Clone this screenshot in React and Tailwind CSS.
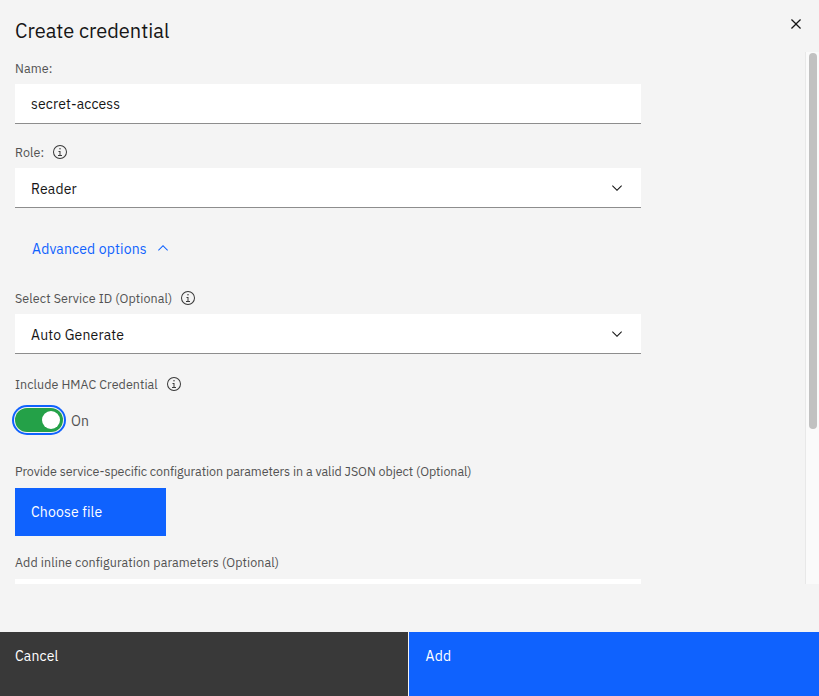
function InfoIcon() {
  return (
    <svg width="16" height="16" viewBox="0 0 32 32" fill="#393939" className="shrink-0">
      <path d="M17 22L17 14 13 14 13 16 15 16 15 22 12 22 12 24 20 24 20 22 17 22z" />
      <path d="M16 8a1.5 1.5 0 1 0 1.5 1.5A1.5 1.5 0 0 0 16 8Z" />
      <path d="M16 30A14 14 0 1 1 30 16 14 14 0 0 1 16 30ZM16 4A12 12 0 1 0 28 16 12 12 0 0 0 16 4Z" />
    </svg>
  );
}

function ChevronDown() {
  return (
    <svg width="16" height="16" viewBox="0 0 16 16" fill="#161616" className="shrink-0">
      <path d="M8 11L3 6 3.7 5.3 8 9.6 12.3 5.3 13 6z" />
    </svg>
  );
}

function Label({ children, className = "tracking-[0.1px]", info }) {
  return (
    <div className="flex h-4 shrink-0 items-center gap-2 text-[12.5px] leading-4 text-[#525252]">
      <span className={`whitespace-nowrap pb-px ${className}`}>{children}</span>
      {info && <InfoIcon />}
    </div>
  );
}

function Select({ value }) {
  return (
    <button className="mt-2 flex h-10 w-[626px] items-center justify-between border-b border-[#8d8d8d] bg-white px-4 pt-px text-left text-sm text-[#161616]">
      <span className="pt-px tracking-[0.16px]">{value}</span>
      <ChevronDown />
    </button>
  );
}

export default function App() {
  return (
    <div className="flex h-[696px] w-[819px] flex-col overflow-hidden bg-[#f4f4f4] font-['IBM_Plex_Sans',Roboto,sans-serif]">
      <header className="flex h-[52px] shrink-0 items-start justify-between pl-[15px] pr-[13px]">
        <h1 className="pt-[17px] text-xl leading-7 text-[#161616]">Create credential</h1>
        <button className="mt-3.5" aria-label="Close">
          <svg width="20" height="20" viewBox="0 0 32 32" fill="#161616">
            <path d="M17.4141 16L24 9.4141 22.5859 8 16 14.5859 9.4143 8 8 9.4141 14.5859 16 8 22.5859 9.4143 24 16 17.4141 22.5859 24 24 22.5859 17.4141 16z" />
          </svg>
        </button>
      </header>

      <main className="flex h-[532px] shrink-0 overflow-hidden">
        <div className="flex flex-1 flex-col items-start overflow-hidden pl-[15px] pt-2">
          <Label>Name:</Label>
          <div className="mt-2 flex h-10 w-[626px] shrink-0 items-center border-b border-[#8d8d8d] bg-white px-4 pt-px text-sm tracking-[0.16px] text-[#161616]">
            secret-access
          </div>

          <div className="mt-5 shrink-0">
            <Label info>Role:</Label>
            <Select value="Reader" />
          </div>

          <button className="mt-8 flex h-4 shrink-0 items-center gap-2 pl-[17px] text-sm text-[#0f62fe]">
            <span className="pt-0.5 tracking-[0.16px]">Advanced options</span>
            <svg width="16" height="16" viewBox="0 0 16 16" fill="#0f62fe">
              <path d="M8 5L13 10 12.3 10.7 8 6.4 3.7 10.7 3 10z" />
            </svg>
          </button>

          <div className="mt-[34px] shrink-0">
            <Label info>Select Service ID (Optional)</Label>
            <Select value="Auto Generate" />
          </div>

          <div className="mt-[22px] shrink-0">
            <Label info className="tracking-[0.06px]">Include HMAC Credential</Label>
          </div>
          <div className="mt-4 flex h-6 shrink-0 items-center gap-2">
            <div className="flex h-6 w-12 items-center justify-end rounded-full bg-[#24a148] pr-[3px] shadow-[0_0_0_1px_#f4f4f4,0_0_0_3px_#0f62fe]">
              <span className="size-[18px] rounded-full bg-white" />
            </div>
            <span className="pt-0.5 text-sm text-[#525252]">On</span>
          </div>

          <div className="mt-[31px] shrink-0">
            <Label className="tracking-[-0.06px]">
              Provide service-specific configuration parameters in a valid JSON object (Optional)
            </Label>
          </div>
          <button className="mt-[9px] flex h-12 w-[151px] shrink-0 items-center bg-[#0f62fe] px-4 text-left text-sm tracking-[0.16px] text-white">
            Choose file
          </button>

          <div className="mt-[18px] shrink-0">
            <Label className="tracking-[0.09px]">Add inline configuration parameters (Optional)</Label>
          </div>
          <div className="mt-[9px] h-10 w-[626px] shrink-0 bg-white" />
        </div>

        <div className="w-3.5 border-l border-[#e8e8e8] bg-[#fafafa] pl-[3px] pt-px">
          <div className="h-[376px] w-2 rounded-full bg-[#c1c1c1]" />
        </div>
      </main>

      <footer className="mt-12 flex h-16 shrink-0 text-sm text-white">
        <button className="flex w-[408px] items-start bg-[#393939] pl-[15px] pt-3.5">
          <span className="tracking-[0.16px]">Cancel</span>
        </button>
        <button className="ml-px flex flex-1 items-start bg-[#0f62fe] pl-[16.5px] pt-3.5">
          <span className="tracking-[0.16px]">Add</span>
        </button>
      </footer>
    </div>
  );
}
